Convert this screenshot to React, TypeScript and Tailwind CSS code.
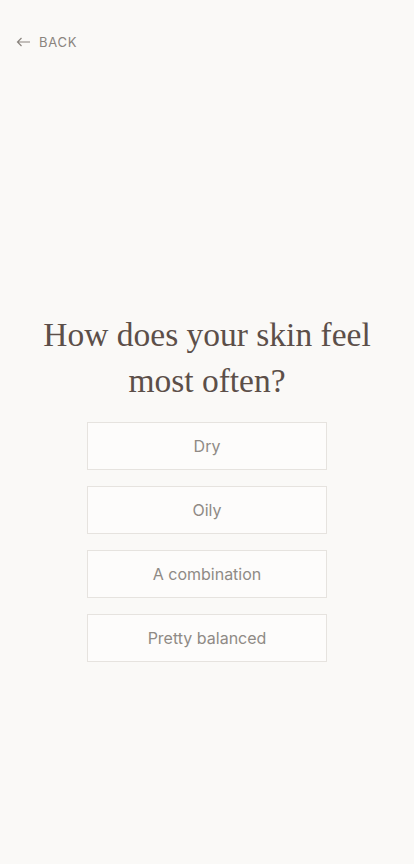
import React from "react";

const options = ["Dry", "Oily", "A combination", "Pretty balanced"];

export default function App() {
  return (
    <div className="min-h-[864px] w-full bg-[#faf9f7] font-['Inter',sans-serif]">
      <header className="flex items-center gap-2 px-4 pt-[34px]">
        <button className="flex items-center gap-[8px] text-[#8a847e]">
          <svg width="15" height="10" viewBox="0 0 15 10" fill="none" stroke="currentColor" strokeWidth="1.2">
            <path d="M14 5H1.5M5.5 1L1.5 5L5.5 9" />
          </svg>
          <span className="text-[13px] leading-[16px] tracking-[0.06em]">BACK</span>
        </button>
      </header>
      <main className="flex flex-col items-center pt-[262px]">
        <h1 className="text-center font-['Liberation_Serif',serif] text-[33.5px] leading-[46px] text-[#5c4f49]">
          How does your skin feel
          <br />
          most often?
        </h1>
        <div className="mt-[18px] flex flex-col gap-4">
          {options.map((o) => (
            <button
              key={o}
              className="h-[48px] w-[240px] border border-[#e6e3df] bg-[#fdfcfb] text-[16px] text-[#8f8a85]"
            >
              {o}
            </button>
          ))}
        </div>
      </main>
    </div>
  );
}
